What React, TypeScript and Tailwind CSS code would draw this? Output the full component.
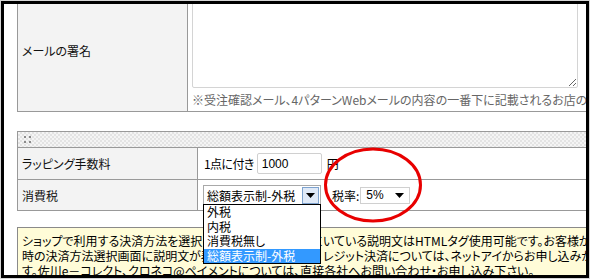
import React from "react";

const jp = "font-['MS_UI_Gothic','Noto_Sans_CJK_JP',sans-serif] [font-feature-settings:'palt']";

function Arrow() {
  return (
    <svg width="9" height="5" viewBox="0 0 9 5">
      <path d="M0 0 H9 L4.5 5 Z" fill="#000" />
    </svg>
  );
}

function Dots() {
  return (
    <div className="flex flex-col gap-[3px]">
      <div className="w-[2px] h-[2px] bg-[#8a8a8a]" />
      <div className="w-[2px] h-[2px] bg-[#8a8a8a]" />
    </div>
  );
}

export default function App() {
  return (
    <div className={`w-[590px] h-[279px] bg-[#d6d6d6] pt-px pl-px relative overflow-hidden text-[12px] leading-[15px] text-[#222] ${jp}`}>
      <div className="w-[588px] h-[277px] border-[3px] border-black bg-white overflow-hidden relative">
        <div className="pl-[13px] w-[640px] mt-[-12px]">
          {/* Table 1 */}
          <div className="flex border border-r-0 border-[#999]">
            <div className="w-[170px] bg-[#f3f3f3] border-r border-[#999] flex items-center pl-[4px] pb-[4px] text-[#111]">
              メールの署名
            </div>
            <div className="flex-1 pl-[4px] pb-[3px]">
              <textarea
                readOnly
                className="block w-[386px] h-[95px] border border-[#d4d4d4] rounded-[2px] bg-white"
              />
              <div className="mt-[4px] h-[16px] leading-[16px] text-[#666] whitespace-nowrap">
                ※受注確認メール、4パターンWebメールの内容の一番下に記載されるお店の署名です。
              </div>
            </div>
          </div>

          {/* Table 2 */}
          <div className="mt-[19px] border border-r-0 border-[#999]">
            <div className="h-[16px] border-b border-[#999] bg-[#efefef] bg-[image:repeating-conic-gradient(#e3e3e3_0_25%,#f4f4f4_0_50%)] bg-[size:4px_4px] flex items-center pl-[6px] gap-[3px]">
              <Dots />
              <Dots />
            </div>
            <div className="flex h-[32px] border-b border-[#999]">
              <div className="w-[180px] bg-[#f3f3f3] border-r border-[#999] flex items-center pl-[4px] text-[#111]">
                ラッピング手数料
              </div>
              <div className="flex-1 flex items-center pl-[6px] text-black">
                <span className="tracking-[-0.6px]">1点に付き</span>
                <input
                  readOnly
                  value="1000"
                  className="ml-[3px] w-[65px] h-[21px] border border-[#d0d0d0] rounded-[2px] px-[4px] text-[12px] font-['Liberation_Sans',sans-serif] text-black"
                />
                <span className="ml-[5px]">円</span>
              </div>
            </div>
            <div className="flex h-[30px]">
              <div className="w-[180px] bg-[#f3f3f3] border-r border-[#999] flex items-center pl-[4px] text-[#111]">
                消費税
              </div>
              <div className="flex-1 flex items-center pl-[5px]">
                <div className="relative">
                  <div className="w-[118px] h-[20px] border border-[#a9a9a9] bg-white flex items-center justify-between pl-[3px] pr-px text-black text-[12px]">
                    <span>総額表示制-外税</span>
                    <div className="w-[17px] h-[17px] border border-[#7da2ce] bg-[#dfe9f7] flex items-center justify-center">
                      <Arrow />
                    </div>
                  </div>
                  <div className="absolute left-0 top-[19px] w-[118px] border border-black bg-white z-10 text-black">
                    <div className="h-[14.5px] leading-[14.5px] pl-[3px]">外税</div>
                    <div className="h-[14.5px] leading-[14.5px] pl-[3px]">内税</div>
                    <div className="h-[14.5px] leading-[14.5px] pl-[3px]">消費税無し</div>
                    <div className="h-[14.5px] leading-[14.5px] pl-[3px] bg-[#3399ff] text-white">総額表示制-外税</div>
                  </div>
                </div>
                <span className="ml-[11px] text-black">税率:</span>
                <div className="ml-px w-[50px] h-[17px] border border-[#d0d0d0] bg-white flex items-center justify-between pl-[5px] pr-[5px] text-black font-['Liberation_Sans',sans-serif] text-[12px]">
                  <span>5%</span>
                  <Arrow />
                </div>
              </div>
            </div>
          </div>

          {/* Info box */}
          <div className="mt-[16px] border border-r-0 border-[#8a8a8a] bg-[#fffcd8] pl-[4px] pt-[5px] text-black whitespace-nowrap">
            <div className="flex">
              <span className="inline-block w-[301px] overflow-hidden shrink-0">ショップで利用する決済方法を選択して下さい。決済方法につ</span>
              <span>いている説明文はHTMLタグ使用可能です。お客様が</span>
            </div>
            <div className="flex">
              <span className="inline-block w-[301px] overflow-hidden shrink-0">時の決済方法選択画面に説明文が表示されます。なお、ク</span>
              <span>レジット決済については、ネットアイからお申し込みが</span>
            </div>
            <div>す。佐川e－コレクト、クロネコ@ペイメントについては、直接各社へお問い合わせ・お申し込み下さい。</div>
          </div>
        </div>
      </div>
      <svg className="absolute left-[319px] top-[144px] z-20" width="108" height="82" viewBox="0 0 108 82">
        <ellipse cx="54" cy="41" rx="47.5" ry="36" fill="none" stroke="#e80000" strokeWidth="3" />
      </svg>
    </div>
  );
}
